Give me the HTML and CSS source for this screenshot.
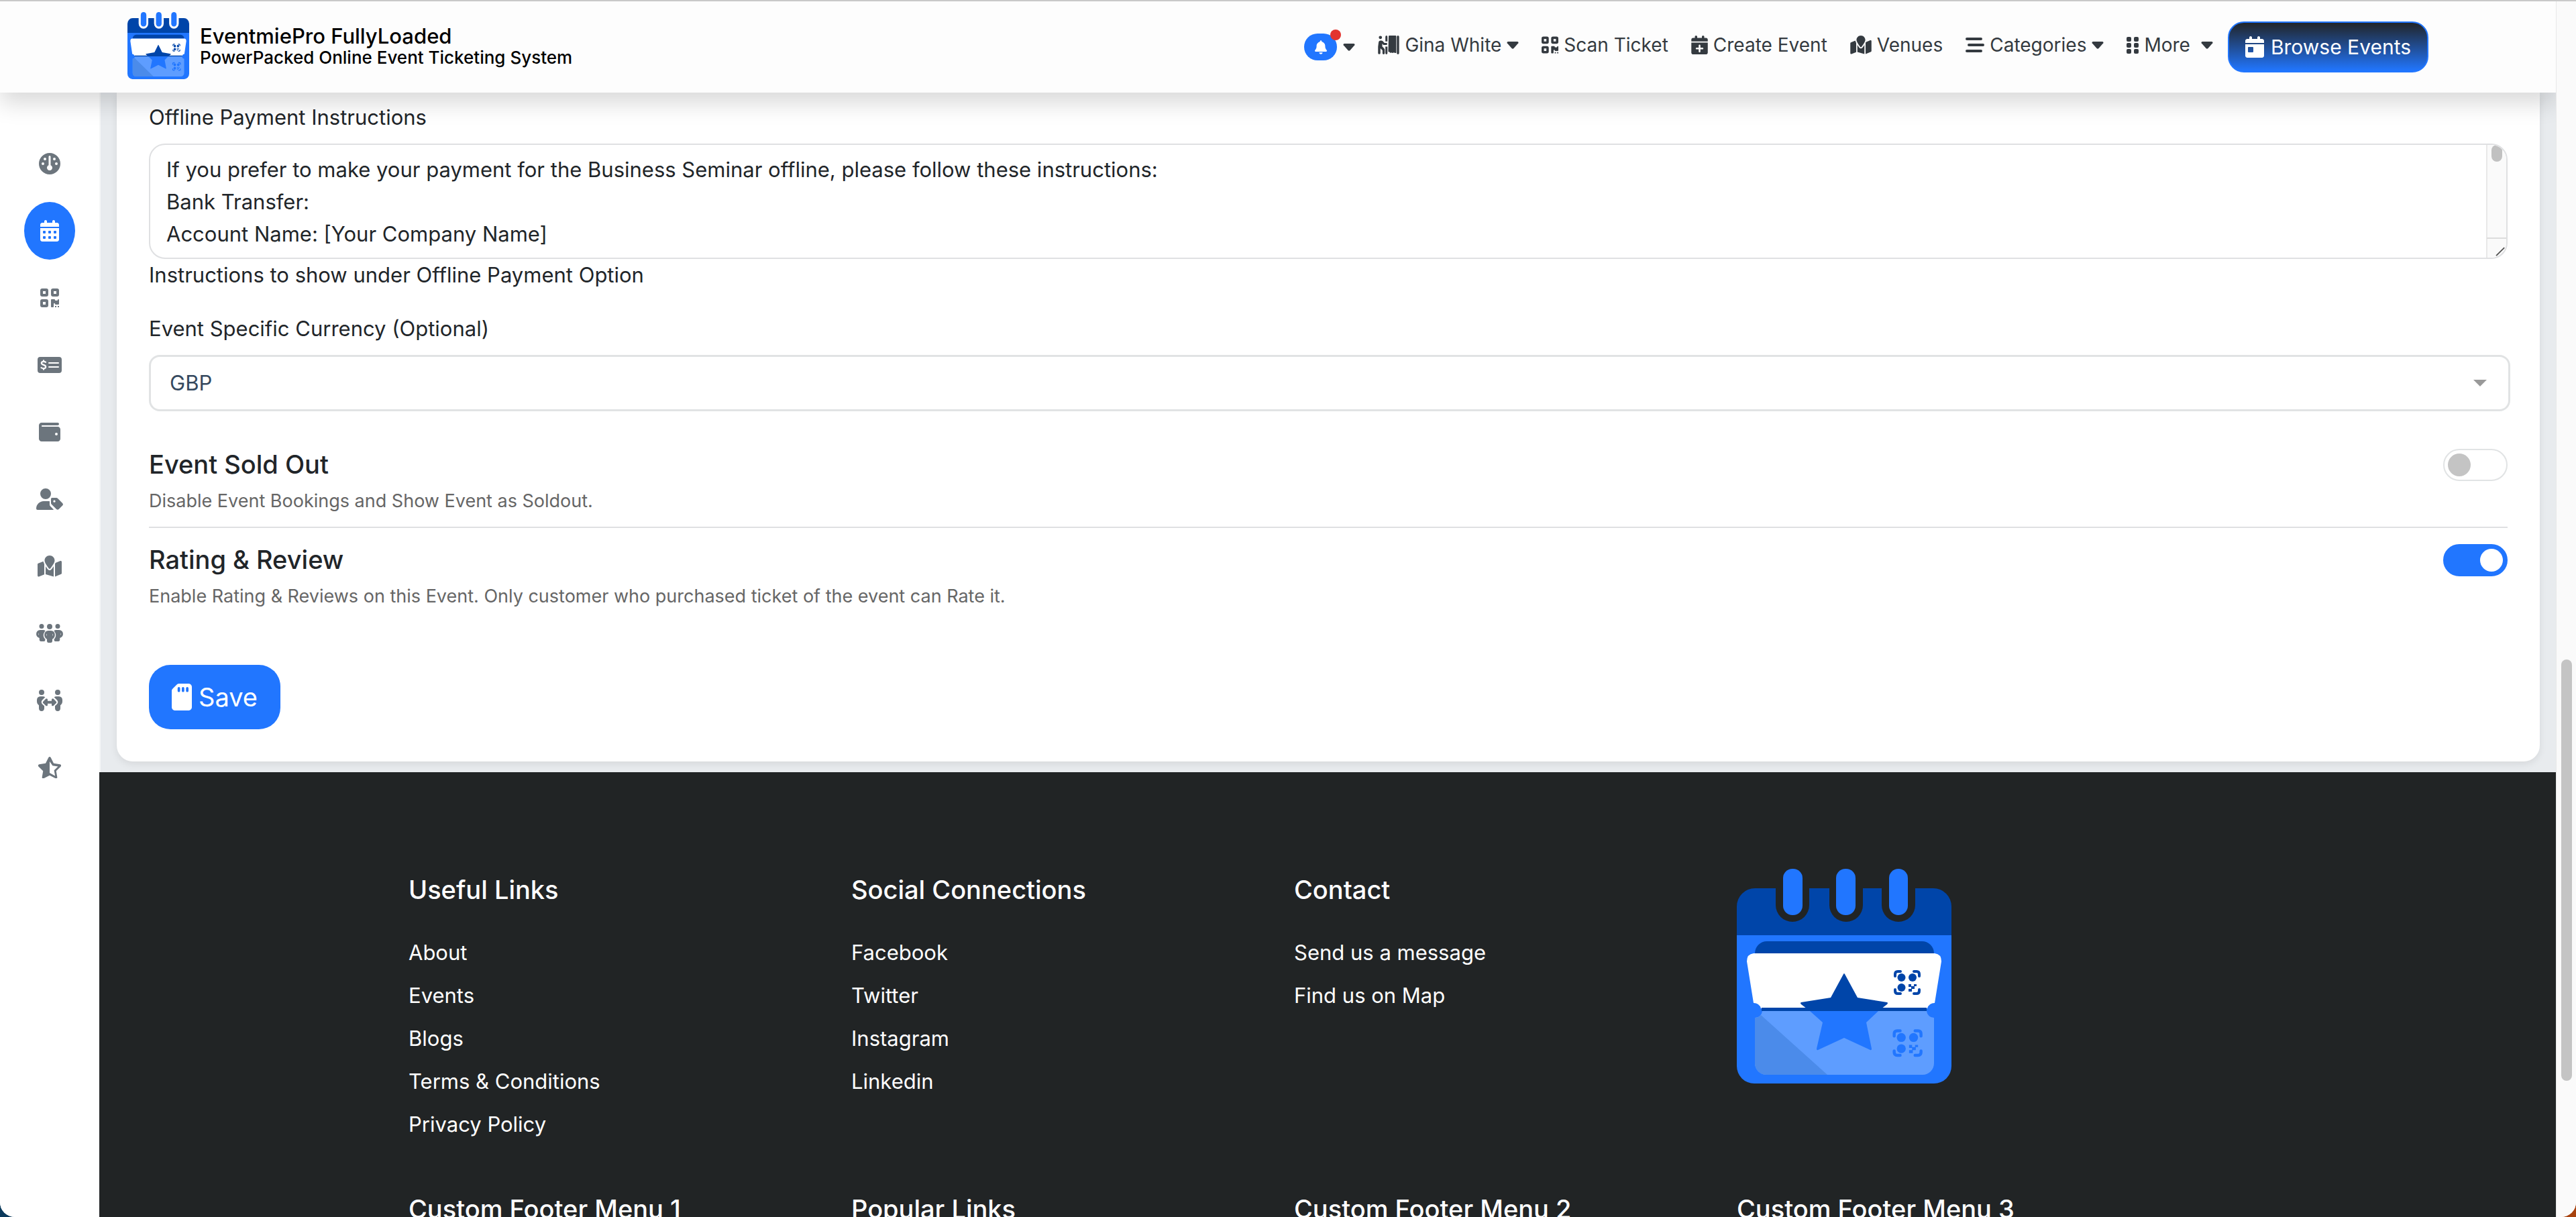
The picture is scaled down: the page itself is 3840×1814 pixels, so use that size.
FILE: index.html
```html
<!DOCTYPE html>
<html lang="en">
<head>
<meta charset="utf-8">
<title>EventmiePro FullyLoaded</title>
<link rel="stylesheet" href="styles.css">
</head>
<body>
<svg class="sprite" aria-hidden="true">
  <symbol id="logo" viewBox="0 0 320 320" preserveAspectRatio="none">
    <rect x="69" y="0" width="29" height="69" rx="14" fill="#2176ff"/>
    <rect x="148" y="0" width="29" height="69" rx="14" fill="#2176ff"/>
    <rect x="227" y="0" width="28" height="69" rx="14" fill="#2176ff"/>
    <path fill="#0045a9" d="M27 29H58V54a25 25 0 0 0 50 0V29H138V54a25 25 0 0 0 50 0V29H216V54a25 25 0 0 0 50 0V29H293a27 27 0 0 1 27 27V99H0V56a27 27 0 0 1 27-27z"/>
    <path fill="#2176ff" d="M0 99H320V294a26 26 0 0 1-26 26H26a26 26 0 0 1-26-26z"/>
    <path fill="#0045a9" d="M27 126a18 18 0 0 1 18-18H276a18 18 0 0 1 18 18z"/>
    <path fill="#fff" d="M25 126H295q10 1 10 12L295 200a11 11 0 0 0-11 8H36a11 11 0 0 0-11-8L15 138q0-11 10-12z"/>
    <path fill="#0045a9" d="M37 207H283V212H37z"/>
    <path fill="#5e9dff" d="M38 212H283a11 11 0 0 0 11 10V290a17 17 0 0 1-17 17H44a17 17 0 0 1-17-17V222a11 11 0 0 0 11-10z"/>
    <path fill="#4b8bea" d="M27 222a11 11 0 0 0 9-4L135 307H44a17 17 0 0 1-17-17z"/>
    <path fill="#0045a9" d="M159 157q1-2 2 0L180 192 224 199q2 1 0 3L211 212H109L96 202q-2-2 0-3L140 192z"/>
    <path fill="#2176ff" d="M109 212H211L193 229 201 268q0 3-2 2L160 252 121 270q-2 1-2-2L128 229z"/>
    <g fill="#0045a9">
      <path fill="none" stroke="#0045a9" stroke-width="4" stroke-linecap="round" d="M236 160V157q0-4 4-4H244M264 153H268q4 0 4 4V160M272 180V182q0 4-4 4H264M244 186H240q-4 0-4-4V180"/>
      <circle cx="245.500" cy="162" r="6"/><circle cx="262" cy="162" r="6"/><circle cx="245.500" cy="177" r="6"/>
      <path d="M256 172h4v3h4v-3h4v3h-3v4h-4v4h-5v-4h4v-3h-4z"/>
    </g>
    <g fill="#2176ff" transform="translate(-27.300 71.600) scale(1.110)">
      <path fill="none" stroke="#2176ff" stroke-width="4" stroke-linecap="round" d="M236 160V157q0-4 4-4H244M264 153H268q4 0 4 4V160M272 180V182q0 4-4 4H264M244 186H240q-4 0-4-4V180"/>
      <circle cx="245.500" cy="162" r="6"/><circle cx="262" cy="162" r="6"/><circle cx="245.500" cy="177" r="6"/>
      <path d="M256 172h4v3h4v-3h4v3h-3v4h-4v4h-5v-4h4v-3h-4z"/>
    </g>
  </symbol>
  <symbol id="bell" viewBox="0 0 448 512"><path d="M224 0c-17.700 0-32 14.300-32 32V51.200C119 66 64 130.600 64 208v18.800c0 47-17.300 92.400-48.500 127.600l-7.400 8.300c-8.400 9.400-10.400 22.900-5.300 34.400S19.400 416 32 416H416c12.600 0 24-7.400 29.200-18.900s3.100-25-5.300-34.400l-7.400-8.300C401.300 319.200 384 273.900 384 226.800V208c0-77.400-55-142-128-156.800V32c0-17.700-14.300-32-32-32zm45.300 493.300c12-12 18.700-28.300 18.700-45.300H160c0 17 6.700 33.300 18.700 45.300s28.300 18.700 45.300 18.700s33.300-6.700 45.300-18.700z"/></symbol>
  <symbol id="caret" viewBox="0 0 18 11"><path d="M2 0H16q2 .3 1.300 2.200L10.500 10q-1.500 1.600-3 0L.7 2.200Q0 .3 2 0z"/></symbol>
  <symbol id="booth" viewBox="0 0 576 512"><path d="M64 96a44 44 0 1 0 0-88 44 44 0 1 0 0 88zM0 480V300l14-110q4-54 56-54h20q24 0 42 18l42 46h52q26 2 26 28t-26 28h-62q-16 0-27-11l-23-24v78l52 52q16 16 16 40v90q-2 29-32 29t-30-29v-80L64 346v134q-2 29-32 29T0 480zM200 32q3-28 29-30 26 2 27 30v130h-56zM200 300h56v180q-2 28-28 30-26-2-28-30zM288 20q2-18 20-20h170q16 2 18 18V464q-40 24-62-8-34 34-62 6-36 26-62-14l-32-8zM512 32q2-28 30-30 30 2 32 30V480q-2 28-32 30-28-2-30-30z"/></symbol>
  <symbol id="qr" viewBox="0 0 448 448"><path fill-rule="evenodd" d="M48 0h96a48 48 0 0 1 48 48v96a48 48 0 0 1-48 48H48a48 48 0 0 1-48-48V48A48 48 0 0 1 48 0zM64 64v64h64V64zM304 0h96a48 48 0 0 1 48 48v96a48 48 0 0 1-48 48h-96a48 48 0 0 1-48-48V48a48 48 0 0 1 48-48zM320 64v64h64V64zM48 256h96a48 48 0 0 1 48 48v96a48 48 0 0 1-48 48H48a48 48 0 0 1-48-48v-96a48 48 0 0 1 48-48zM64 320v64h64v-64zM272 256h64q16 0 16 16 0 16 16 16h32q16 0 16-16t16-16 16 16v96q0 16-16 16h-64q-16 0-16-16t-16-16-16 16v64q0 16-16 16h-32q-16 0-16-16V272q0-16 16-16zM352 416h32v32h-32zM416 416h32v32h-32z"/></symbol>
  <symbol id="cal-plus" viewBox="0 0 448 512"><path fill-rule="evenodd" d="M96 32V64H48C21.500 64 0 85.500 0 112v48H448V112c0-26.500-21.500-48-48-48H352V32c0-17.700-14.300-32-32-32s-32 14.300-32 32V64H160V32c0-17.700-14.300-32-32-32S96 14.300 96 32zM448 192H0V464c0 26.500 21.500 48 48 48H400c26.500 0 48-21.500 48-48V192zM224 248c13.300 0 24 10.700 24 24v56h56c13.300 0 24 10.700 24 24s-10.700 24-24 24H248v56c0 13.300-10.700 24-24 24s-24-10.700-24-24V376H144c-13.300 0-24-10.700-24-24s10.700-24 24-24h56V272c0-13.300 10.700-24 24-24z"/></symbol>
  <symbol id="cal-day" viewBox="0 0 448 512"><path fill-rule="evenodd" d="M96 32V64H48C21.500 64 0 85.500 0 112v48H448V112c0-26.500-21.500-48-48-48H352V32c0-17.700-14.300-32-32-32s-32 14.300-32 32V64H160V32c0-17.700-14.300-32-32-32S96 14.300 96 32zM448 192H0V464c0 26.500 21.500 48 48 48H400c26.500 0 48-21.500 48-48V192zM80 256h96q16 0 16 16v96q0 16-16 16H80q-16 0-16-16v-96q0-16 16-16z"/></symbol>
  <symbol id="cal-days" viewBox="0 0 448 512"><path fill-rule="evenodd" d="M96 32V64H48C21.500 64 0 85.500 0 112v48H448V112c0-26.500-21.500-48-48-48H352V32c0-17.700-14.300-32-32-32s-32 14.300-32 32V64H160V32c0-17.700-14.300-32-32-32S96 14.300 96 32zM448 192H0V464c0 26.500 21.500 48 48 48H400c26.500 0 48-21.500 48-48V192zM80 256h32q16 0 16 16v32q0 16-16 16H80q-16 0-16-16v-32q0-16 16-16zM208 256h32q16 0 16 16v32q0 16-16 16h-32q-16 0-16-16v-32q0-16 16-16zM336 256h32q16 0 16 16v32q0 16-16 16h-32q-16 0-16-16v-32q0-16 16-16zM80 384h32q16 0 16 16v32q0 16-16 16H80q-16 0-16-16v-32q0-16 16-16zM208 384h32q16 0 16 16v32q0 16-16 16h-32q-16 0-16-16v-32q0-16 16-16zM336 384h32q16 0 16 16v32q0 16-16 16h-32q-16 0-16-16v-32q0-16 16-16z"/></symbol>
  <symbol id="map" viewBox="0 0 576 512"><path d="M408 120c0 54.600-73.100 151.900-105.200 192c-7.700 9.600-22 9.600-29.600 0C241.100 271.900 168 174.600 168 120C168 53.700 221.700 0 288 0s120 53.700 120 120zm8 80.400c3.500-6.900 6.700-13.800 9.600-20.600c.5-1.200 1-2.500 1.500-3.700l116-46.400C558.900 123.400 576 135 576 152V422.800c0 9.800-6 18.600-15.100 22.300L416 503V200.400zM137.600 138.300c2.400 14.100 7.200 28.300 12.800 41.500c2.900 6.800 6.100 13.700 9.600 20.600V451.800L32.900 502.700C17.100 509 0 497.400 0 480.400V209.600c0-9.800 6-18.600 15.100-22.300l122.600-49zM327.800 332c13.900-17.400 35.700-45.700 56.200-77V504.300L192 449.400V255c20.500 31.300 42.300 59.600 56.200 77c20.500 25.600 59.100 25.600 79.600 0z"/></symbol>
  <symbol id="bars" viewBox="0 0 28 22"><rect x="0" y="0" width="25" height="4" rx="2"/><rect x="3" y="9" width="25" height="4" rx="2"/><rect x="0" y="18" width="25" height="4" rx="2"/></symbol>
  <symbol id="grip" viewBox="0 0 18 25"><rect width="7" height="7" rx="2"/><rect x="11" width="7" height="7" rx="2"/><rect y="9" width="7" height="7" rx="2"/><rect x="11" y="9" width="7" height="7" rx="2"/><rect y="18" width="7" height="7" rx="2"/><rect x="11" y="18" width="7" height="7" rx="2"/></symbol>
  <symbol id="gauge" viewBox="0 0 512 512"><path fill-rule="evenodd" d="M0 256a256 256 0 1 1 512 0A256 256 0 1 1 0 256zM256 64a24 24 0 0 0-24 24V293a64 64 0 1 0 48 0V88a24 24 0 0 0-24-24zM144 112a32 32 0 1 0 0 64 32 32 0 1 0 0-64zM368 112a32 32 0 1 0 0 64 32 32 0 1 0 0-64zM96 224a32 32 0 1 0 0 64 32 32 0 1 0 0-64zM416 224a32 32 0 1 0 0 64 32 32 0 1 0 0-64z"/></symbol>
  <symbol id="money" viewBox="0 0 576 384"><path fill-rule="evenodd" d="M64 0H512a64 64 0 0 1 64 64V320a64 64 0 0 1-64 64H64a64 64 0 0 1-64-64V64A64 64 0 0 1 64 0zM272 128a16 16 0 0 0 0 32H496a16 16 0 0 0 0-32zM272 224a16 16 0 0 0 0 32H496a16 16 0 0 0 0-32z"/><path fill="none" stroke="#fff" stroke-width="36" stroke-linecap="round" d="M144 86v22M144 276v22M192 124C150 104 96 106 94 146c-2 54 100 34 100 88 0 46-60 50-106 24"/></symbol>
  <symbol id="wallet" viewBox="0 32 512 448"><path fill-rule="evenodd" d="M64 32C28.700 32 0 60.700 0 96V416c0 35.300 28.700 64 64 64H448c35.300 0 64-28.700 64-64V192c0-35.300-28.700-64-64-64H80c-8.800 0-16-7.200-16-16s7.200-16 16-16H448c17.700 0 32-14.300 32-32s-14.300-32-32-32H64zM416 272a32 32 0 1 1 0 64 32 32 0 1 1 0-64z"/></symbol>
  <symbol id="user-tag" viewBox="0 0 640 512"><path fill-rule="evenodd" d="M224 0a128 128 0 1 1 0 256A128 128 0 1 1 224 0zM178 304H310q10 2 10 14v66q0 26 19 45l75 75-6 8H30q-28-2-30-30C0 384 80 304 178 304zM376 224h104q20 0 34 14l112 112q26 28 0 56l-88 90q-28 24-56 0L366 380q-14-14-14-34v-98q0-24 24-24zM432 280a26 26 0 1 0 0 52 26 26 0 1 0 0-52z"/></symbol>
  <symbol id="group" viewBox="0 32 640 448"><path fill-rule="evenodd" d="M72 88a56 56 0 1 1 112 0A56 56 0 1 1 72 88zM456 88a56 56 0 1 1 112 0 56 56 0 1 1-112 0zM256 96a64 64 0 1 1 128 0 64 64 0 1 1-128 0zM96 176h66q40 0 56 22c-46 44-66 120-18 180l14 18v18q0 30-30 34H108q-32-4-32-36v-44C30 350 0 322 0 272q4-92 96-96zM64 248q-22 26 0 52zM478 176h66q92 4 96 96c0 50-30 78-76 96v44q0 32-32 36H456q-30-4-30-34v-18l14-18c48-60 28-136-18-180q16-22 56-22zM576 248v52q22-26 0-52zM290 192h60q90 4 96 98c0 56-28 82-62 104v50q-4 34-36 36h-56q-32-2-36-36v-50c-34-22-62-48-62-104q6-94 96-98zM256 262q-24 28 0 56zM384 262v56q24-28 0-56z"/></symbol>
  <symbol id="arrows" viewBox="0 0 608 512"><path d="M48 64a64 64 0 1 1 128 0A64 64 0 1 1 48 64zM432 64a64 64 0 1 1 128 0 64 64 0 1 1-128 0zM84 160h56q34 0 56 20l-68 68q-42 48 0 96l48 44v60q-6 60-64 64-60-4-64-64V370Q0 338 0 280V244q4-80 84-84zM524 160q80 4 84 84v36q0 58-48 90v78q-4 60-64 64-58-4-64-64v-60l48-44q42-48 0-96l-68-68q22-20 56-20zM148 318q-18-18 0-36l66-66q28-16 42 14v38h96v-38q14-30 42-14l66 66q18 18 0 36l-66 66q-28 16-42-14v-38h-96v38q-14 30-42 14z"/></symbol>
  <symbol id="star" viewBox="0 0 544 512"><path fill-rule="evenodd" d="M244 18q28-36 56 0l68 138 152 22q40 12 18 54L428 340l26 150q-2 38-44 24L272 443 134 514q-40 12-44-24l26-150L6 232q-22-40 18-54l152-22zM272 110V386l8 2 122 66-24-130 94-92-130-20z"/></symbol>
  <symbol id="sd" viewBox="0 0 384 512"><path fill-rule="evenodd" d="M320 0H141.300C124.300 0 108 6.700 96 18.700L18.700 96C6.700 108 0 124.300 0 141.300V448c0 35.300 28.700 64 64 64H320c35.300 0 64-28.700 64-64V64c0-35.300-28.700-64-64-64zM160 88v48a24 24 0 0 1-48 0V88a24 24 0 0 1 48 0zm80 0v48a24 24 0 0 1-48 0V88a24 24 0 0 1 48 0zm80 0v48a24 24 0 0 1-48 0V88a24 24 0 0 1 48 0z"/></symbol>
</svg>

<div class="window">
  <div class="page">
    <header class="topbar">
      <a class="brand" href="#">
        <svg class="brand-logo"><use href="#logo"/></svg>
        <span class="brand-text">
          <span class="brand-name">EventmiePro FullyLoaded</span>
          <span class="brand-tagline">PowerPacked Online Event Ticketing System</span>
        </span>
      </a>
      <nav class="nav" aria-label="Main">
        <button class="nav-item notify" type="button" aria-label="Notifications">
          <span class="bell"><svg class="bell-icon"><use href="#bell"/></svg><span class="dot"></span></span>
          <svg class="caret"><use href="#caret"/></svg>
        </button>
        <a class="nav-item" href="#"><svg class="i32"><use href="#booth"/></svg>Gina White<svg class="caret"><use href="#caret"/></svg></a>
        <a class="nav-item" href="#"><svg class="i25"><use href="#qr"/></svg>Scan Ticket</a>
        <a class="nav-item" href="#"><svg class="i25"><use href="#cal-plus"/></svg>Create Event</a>
        <a class="nav-item" href="#"><svg class="i32"><use href="#map"/></svg>Venues</a>
        <a class="nav-item" href="#"><svg class="i28"><use href="#bars"/></svg>Categories<svg class="caret"><use href="#caret"/></svg></a>
        <a class="nav-item more" href="#"><svg class="i18"><use href="#grip"/></svg>More<svg class="caret"><use href="#caret"/></svg></a>
        <a class="browse" href="#"><svg class="i32tall"><use href="#cal-day"/></svg>Browse Events</a>
      </nav>
    </header>

    <div class="layout">
      <nav class="sidebar" aria-label="Dashboard">
        <a class="side-item" href="#" aria-label="Dashboard"><svg class="s32"><use href="#gauge"/></svg></a>
        <a class="side-item active" href="#" aria-label="Events"><svg class="s28"><use href="#cal-days"/></svg></a>
        <a class="side-item" href="#" aria-label="Scan"><svg class="s28"><use href="#qr"/></svg></a>
        <a class="side-item" href="#" aria-label="Bookings"><svg class="s36"><use href="#money"/></svg></a>
        <a class="side-item" href="#" aria-label="Earnings"><svg class="s32"><use href="#wallet"/></svg></a>
        <a class="side-item" href="#" aria-label="Tags"><svg class="s40"><use href="#user-tag"/></svg></a>
        <a class="side-item" href="#" aria-label="Venues"><svg class="s36"><use href="#map"/></svg></a>
        <a class="side-item" href="#" aria-label="Organizers"><svg class="s40"><use href="#group"/></svg></a>
        <a class="side-item" href="#" aria-label="Partners"><svg class="s38"><use href="#arrows"/></svg></a>
        <a class="side-item" href="#" aria-label="Reviews"><svg class="s34"><use href="#star"/></svg></a>
      </nav>

      <div class="content">
        <main class="main">
          <form class="card">
            <div class="field">
              <label for="offline">Offline Payment Instructions</label>
              <div class="text-box">
                <textarea id="offline" rows="3">If you prefer to make your payment for the Business Seminar offline, please follow these instructions:
Bank Transfer:
Account Name: [Your Company Name]</textarea>
                <div class="scroll-rail" aria-hidden="true">
                  <span class="scroll-thumb"></span>
                  <svg class="grip" viewBox="0 0 30 30"><path d="M14 27 27 14M21 27l6-6" stroke="#555" stroke-width="2" fill="none"/></svg>
                </div>
              </div>
              <p class="help">Instructions to show under Offline Payment Option</p>
            </div>
            <div class="field currency">
              <label for="currency">Event Specific Currency (Optional)</label>
              <div class="select-box">
                <select id="currency"><option>GBP</option></select>
                <svg class="select-caret" viewBox="0 0 20 10"><path d="M0 0H20L10 10z" fill="#999"/></svg>
              </div>
            </div>
            <div class="option">
              <div>
                <label class="option-title" for="soldout">Event Sold Out</label>
                <p class="option-note">Disable Event Bookings and Show Event as Soldout.</p>
              </div>
              <input class="switch" type="checkbox" id="soldout">
            </div>
            <div class="option">
              <div>
                <label class="option-title" for="rating">Rating &amp; Review</label>
                <p class="option-note">Enable Rating &amp; Reviews on this Event. Only customer who purchased ticket of the event can Rate it.</p>
              </div>
              <input class="switch" type="checkbox" id="rating" checked>
            </div>
            <button class="save" type="submit"><svg class="save-icon"><use href="#sd"/></svg>Save</button>
          </form>
        </main>

        <footer class="footer">
          <div class="footer-grid">
            <section>
              <h2>Useful Links</h2>
              <ul>
                <li><a href="#">About</a></li>
                <li><a href="#">Events</a></li>
                <li><a href="#">Blogs</a></li>
                <li><a href="#">Terms &amp; Conditions</a></li>
                <li><a href="#">Privacy Policy</a></li>
              </ul>
            </section>
            <section>
              <h2>Social Connections</h2>
              <ul>
                <li><a href="#">Facebook</a></li>
                <li><a href="#">Twitter</a></li>
                <li><a href="#">Instagram</a></li>
                <li><a href="#">Linkedin</a></li>
              </ul>
            </section>
            <section>
              <h2>Contact</h2>
              <ul>
                <li><a href="#">Send us a message</a></li>
                <li><a href="#">Find us on Map</a></li>
              </ul>
            </section>
            <svg class="footer-logo"><use href="#logo"/></svg>
            <h2>Custom Footer Menu 1</h2>
            <h2>Popular Links</h2>
            <h2>Custom Footer Menu 2</h2>
            <h2>Custom Footer Menu 3</h2>
          </div>
        </footer>
      </div>
    </div>
  </div>
  <div class="page-rail" aria-hidden="true"><span class="page-thumb"></span></div>
</div>
</body>
</html>
```

FILE: styles.css
```css
* { box-sizing: border-box; }

body {
  margin: 0;
  background: linear-gradient(90deg, #0c3a5c 50%, #a8430f 50%);
  color: #212529;
  font-family: Inter, "Liberation Sans", sans-serif;
  font-size: 31px;
  line-height: 48px;
}

.sprite { position: absolute; width: 0; height: 0; }
svg { display: block; fill: currentColor; flex: none; }
a { color: inherit; text-decoration: none; }
p, h2, ul { margin: 0; padding: 0; }
ul { list-style: none; }
button, select, textarea { font: inherit; color: inherit; }

.window {
  display: flex;
  height: 100vh;
  overflow: hidden;
  border-top: 2px solid #c9c9c9;
  border-radius: 0 0 22px 22px;
  background: #fff;
}
.page { flex: 1; min-width: 0; display: flex; flex-direction: column; overflow: hidden; }

.topbar {
  position: relative;
  z-index: 2;
  flex: none;
  display: flex;
  justify-content: space-between;
  align-items: center;
  height: 136px;
  padding: 0 190px;
  background: #fdfdfd;
  box-shadow: 0 16px 32px rgba(0, 0, 0, .15);
}
.brand { display: flex; align-items: center; gap: 16px; color: #000; font-weight: 500; }
.brand-logo { width: 92px; height: 100px; margin-bottom: 4px; }
.brand-text { display: flex; flex-direction: column; padding-bottom: 4px; }
.brand-name { font-size: 31px; line-height: 36px; }
.brand-tagline { font-size: 26px; line-height: 28px; }

.nav { display: flex; align-items: center; gap: 34px; font-size: 28px; color: #343a40; white-space: nowrap; }
.nav-item { display: flex; align-items: center; gap: 8px; padding: 0 0 6px; border: 0; background: none; }
.notify { gap: 9px; padding: 0; }
.bell {
  position: relative;
  display: grid;
  place-items: center;
  width: 49px;
  height: 40px;
  border-radius: 20px;
  background: #2176ff;
  color: #fff;
}
.bell-icon { width: 18px; height: 21px; }
.dot { position: absolute; top: -6px; right: -6px; width: 16px; height: 16px; border-radius: 50%; background: #e3342f; }
.caret { width: 18px; height: 11px; }
.i32 { width: 32px; height: 28px; }
.i28 { width: 28px; height: 22px; }
.i25 { width: 25px; height: 28px; }
.i18 { width: 18px; height: 25px; }
.i32tall { width: 28px; height: 32px; }
.more { margin-right: -12px; }
.more .caret { margin-left: 8px; }
.browse {
  display: flex;
  align-items: center;
  gap: 10px;
  height: 76px;
  padding: 0 24px;
  border: 2px solid #2176ff;
  border-radius: 24px;
  background: linear-gradient(#212529, #2176ff);
  color: #fff;
  font-size: 30px;
}

.layout { flex: 1; display: flex; align-items: stretch; }
.sidebar {
  flex: none;
  display: flex;
  flex-direction: column;
  align-items: center;
  gap: 14px;
  width: 148px;
  padding-top: 63px;
  background: #fff;
  color: #6c757d;
}
.side-item { display: grid; place-items: center; width: 76px; height: 86px; border-radius: 50%; }
.side-item.active { background: #2176ff; color: #fff; }
.s28, .s32, .s34, .s36, .s38, .s40 { height: 32px; }
.s28 { width: 28px; }
.s32 { width: 32px; }
.s34 { width: 34px; }
.s36 { width: 36px; }
.s38 { width: 38px; }
.s40 { width: 40px; }

.content { flex: 1; min-width: 0; display: flex; flex-direction: column; }
.main { padding: 0 24px 16px 24px; border-left: 2px solid #f6f7f8; background: #e8ebee; }
.card {
  padding: 13px 48px 48px;
  border-radius: 0 0 24px 24px;
  background: #fff;
  box-shadow: 0 4px 12px rgba(0, 0, 0, .08);
}
.field { display: flex; flex-direction: column; }
.field label { margin-bottom: 15px; }
.text-box {
  display: flex;
  height: 172px;
  border: 2px solid #dfe0e2;
  border-radius: 24px;
  overflow: hidden;
}
.text-box textarea {
  flex: 1;
  min-width: 0;
  padding: 13px 24px;
  border: 0;
  outline: 0;
  resize: none;
  overflow: hidden;
  background: none;
}
.scroll-rail {
  display: flex;
  flex-direction: column;
  justify-content: space-between;
  align-items: center;
  width: 30px;
  border-left: 2px solid #e8e8e8;
  background: #fafafa;
}
.scroll-thumb { width: 16px; height: 25px; border-radius: 8px; background: #c1c1c1; }
.grip { width: 30px; height: 30px; border-top: 2px solid #dcdcdc; }
.currency { margin-top: 32px; }
.select-box {
  display: flex;
  align-items: center;
  height: 84px;
  margin-right: -4px;
  padding-right: 32px;
  border: 3px solid #e1e3e4;
  border-radius: 16px;
}
.select-box select {
  flex: 1;
  height: 100%;
  padding: 0 28px;
  border: 0;
  outline: 0;
  appearance: none;
  background: none;
  color: #35495e;
}
.select-caret { width: 20px; height: 10px; }

.option { display: flex; justify-content: space-between; padding-top: 23px; }
.currency + .option { padding: 55px 0 17px; border-bottom: 2px solid #dfe0e2; }
.option-title { display: block; margin-bottom: 10px; font-size: 38px; font-weight: 500; }
.option-note { color: #666; font-size: 27px; line-height: 42px; }
.switch {
  appearance: none;
  display: flex;
  align-items: center;
  width: 96px;
  height: 48px;
  margin: 1px 0 0;
  padding: 0 5px;
  border: 2px solid #e1e3e4;
  border-radius: 24px;
  background: #fff;
}
.switch::before { content: ""; width: 34px; height: 34px; border-radius: 50%; background: #c4c4c4; }
.switch:checked { justify-content: flex-end; border-color: #2176ff; background: #2176ff; }
.switch:checked::before { background: #fff; }
.save {
  display: flex;
  align-items: center;
  gap: 10px;
  height: 96px;
  margin-top: 81px;
  padding: 0 34px;
  border: 0;
  border-radius: 32px;
  background: #2176ff;
  color: #fff;
  font-size: 38px;
}
.save-icon { width: 30px; height: 40px; }

.footer { flex: 1; padding: 144px 100px 0 0; background: #212425; color: #fff; }
.footer-grid {
  display: grid;
  grid-template-columns: repeat(4, 1fr);
  row-gap: 71px;
  align-items: start;
  max-width: 2640px;
  margin: 0 auto;
}
.footer h2 { padding-top: 7px; font-size: 38px; font-weight: 500; line-height: 48px; }
.footer ul { display: grid; gap: 16px; margin-top: 46px; }
.footer-logo { width: 320px; height: 320px; }

.page-rail { width: 30px; padding: 981px 6px 0 7px; border-left: 1px solid #e8e8e8; background: #fafafa; }
.page-thumb { display: block; height: 628px; border-radius: 8px; background: #c4c4c4; }
```
